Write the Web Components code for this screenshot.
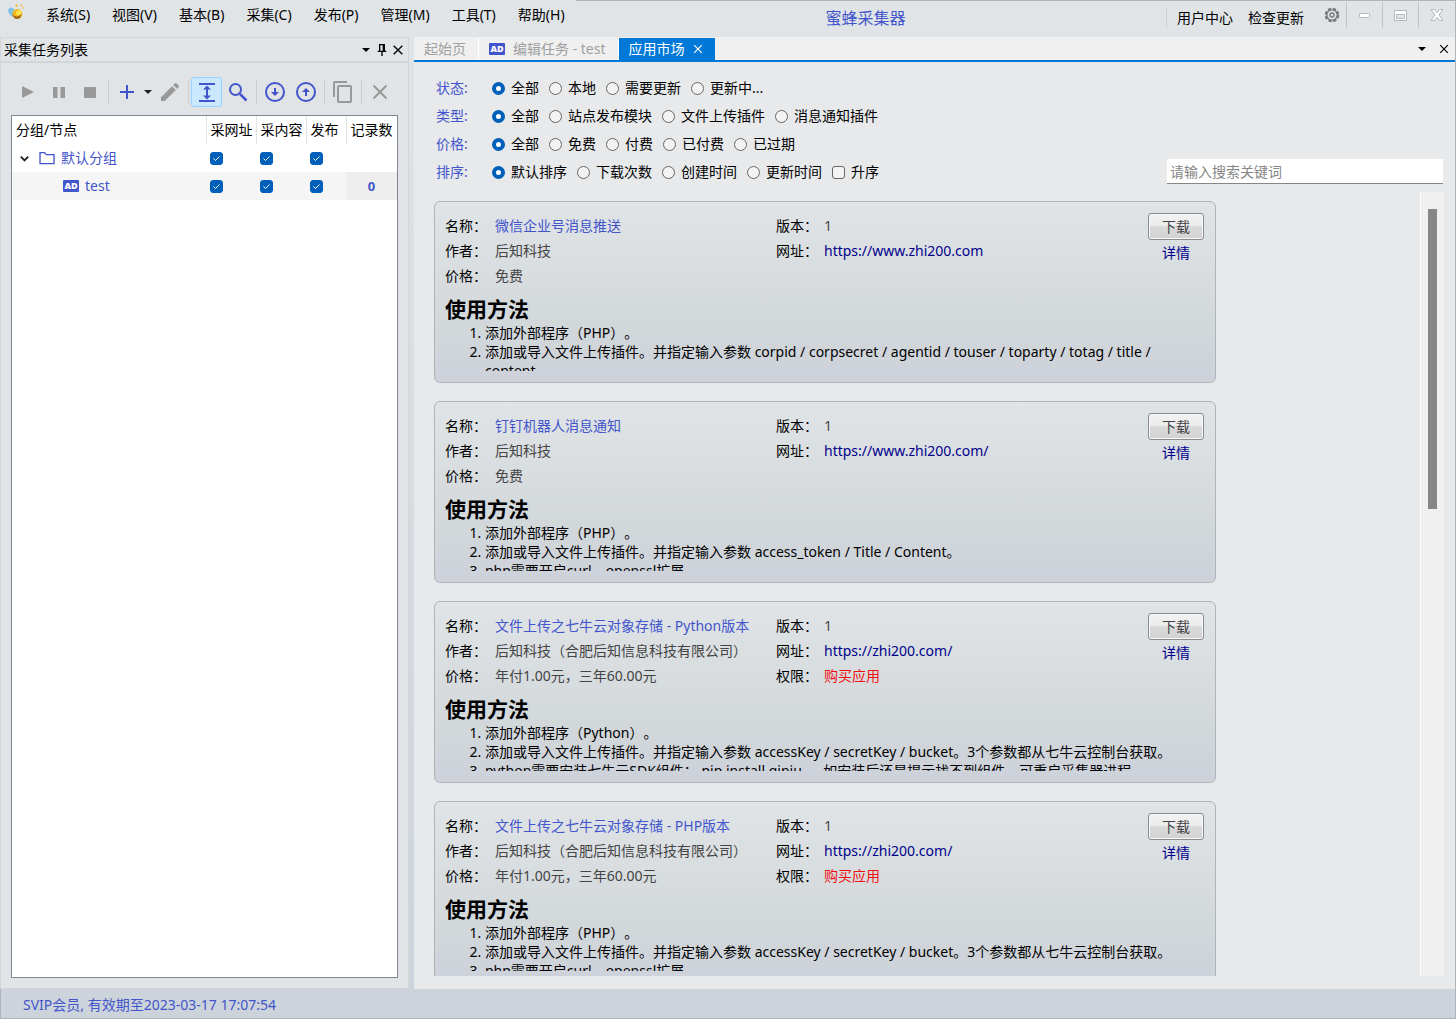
<!DOCTYPE html>
<html lang="zh-CN">
<head>
<meta charset="utf-8">
<title>蜜蜂采集器</title>
<style>
    :root {
        --accent: #4355cb;
        --active: #0078d7;
        --check: #005fb8;
        --line: #b0b4b8;
        --muted: #999;
    }
    body {
        margin: 0;
        font: 14px/20px "Noto Sans", "Noto Sans CJK SC", sans-serif;
        text-spacing-trim: space-all;
        color: #000;
    }
    h2 { margin: 0; font-size: 21px; line-height: 28px; }
    ol { margin: 0; padding-left: 40px; line-height: 19px; }
</style>
</head>
<body>
<bee-window>
    <bee-title-bar slot="title" caption="蜜蜂采集器"></bee-title-bar>
    <bee-task-panel slot="side"></bee-task-panel>
    <bee-tab-bar slot="tabs"></bee-tab-bar>
    <bee-filters slot="filters"></bee-filters>

    <bee-card name="微信企业号消息推送" author="后知科技" price="免费" url="https://www.zhi200.com">
        <h2>使用方法</h2>
        <ol>
            <li>添加外部程序（PHP）。</li>
            <li>添加或导入文件上传插件。并指定输入参数 corpid / corpsecret / agentid / touser / toparty / totag / title / content</li>
        </ol>
    </bee-card>
    <bee-card name="钉钉机器人消息通知" author="后知科技" price="免费" url="https://www.zhi200.com/">
        <h2>使用方法</h2>
        <ol>
            <li>添加外部程序（PHP）。</li>
            <li>添加或导入文件上传插件。并指定输入参数 access_token / Title / Content。</li>
            <li>php需要开启curl、openssl扩展</li>
        </ol>
    </bee-card>
    <bee-card name="文件上传之七牛云对象存储 - Python版本" author="后知科技（合肥后知信息科技有限公司）" price="年付1.00元，三年60.00元" url="https://zhi200.com/" paid>
        <h2>使用方法</h2>
        <ol>
            <li>添加外部程序（Python）。</li>
            <li>添加或导入文件上传插件。并指定输入参数 accessKey / secretKey / bucket。3个参数都从七牛云控制台获取。</li>
            <li>python需要安装七牛云SDK组件： pip install qiniu 。 如安装后还是提示找不到组件，可重启采集器进程</li>
        </ol>
    </bee-card>
    <bee-card name="文件上传之七牛云对象存储 - PHP版本" author="后知科技（合肥后知信息科技有限公司）" price="年付1.00元，三年60.00元" url="https://zhi200.com/" paid>
        <h2>使用方法</h2>
        <ol>
            <li>添加外部程序（PHP）。</li>
            <li>添加或导入文件上传插件。并指定输入参数 accessKey / secretKey / bucket。3个参数都从七牛云控制台获取。</li>
            <li>php需要开启curl、openssl扩展</li>
        </ol>
    </bee-card>

    <span slot="status">SVIP会员, 有效期至2023-03-17 17:07:54</span>
</bee-window>

<script>
const ICONS = {
    play: '<path d="M6 6v12l12-6z"/>',
    pause: '<path d="M6 7h4.500v11H6zM13.500 7H18v11h-4.500z"/>',
    stop: '<rect x="6" y="7" width="12" height="11" rx="1"/>',
    plus: '<path d="M5 12h14M12 5v14" fill="none" stroke="currentColor" stroke-width="2"/>',
    caret: '<path d="M8 10h8l-4 4z"/>',
    pencil: '<path d="M3 17.250V21h3.750L17.810 9.940l-3.750-3.750zM20.710 7.040a1 1 0 0 0 0-1.410l-2.340-2.340a1 1 0 0 0-1.410 0l-1.830 1.830 3.750 3.750z"/>',
    expand: '<path d="M4 3h16v2H4zM4 20h16v2H4zM12 5.500l4 4h-3v6h3l-4 4-4-4h3v-6H8z"/>',
    search: '<circle cx="9.500" cy="9.500" r="5.500" fill="none" stroke="currentColor" stroke-width="2"/><path d="M14 14l6.500 6.500" stroke="currentColor" stroke-width="2.500"/>',
    down: '<circle cx="12" cy="12" r="9" fill="none" stroke="currentColor" stroke-width="2"/><path d="M11 8h2v4h3l-4 4-4-4h3z"/>',
    up: '<circle cx="12" cy="12" r="9" fill="none" stroke="currentColor" stroke-width="2"/><path d="M11 16h2v-4h3l-4-4-4 4h3z"/>',
    copy: '<path d="M16 1H4a2 2 0 0 0-2 2v14h2V3h12zM19 5H8a2 2 0 0 0-2 2v14a2 2 0 0 0 2 2h11a2 2 0 0 0 2-2V7a2 2 0 0 0-2-2zm0 16H8V7h11z"/>',
    cross: '<path d="M5.500 5.500l13 13M18.500 5.500l-13 13" fill="none" stroke="currentColor" stroke-width="2"/>',
    pin: '<path d="M7.500 3h9v10h2v2h-5.500v6h-2v-6H5.500v-2h2zM9.500 5v8h3.500V5z" fill-rule="evenodd"/>',
    chevron: '<path d="M4 8l8 8 8-8" fill="none" stroke="currentColor" stroke-width="4"/>',
    folder: '<path d="M1.500 4h7l2.500 3h11.500v13.500h-21z" fill="none" stroke="currentColor" stroke-width="2"/>',
    gear: '<g fill="none" stroke="currentColor"><circle cx="12" cy="12" r="9.500" stroke-width="3" stroke-dasharray="5 2.460"/><circle cx="12" cy="12" r="7.800" stroke-width="2"/><circle cx="12" cy="12" r="3" stroke-width="2"/></g>',
    bee: '<ellipse cx="6" cy="12" rx="5" ry="7" fill="#7fc4e8" transform="rotate(-30 6 12)"/><circle cx="14" cy="15" r="7.500" fill="#f0b51e"/><path d="M7 17q6 6 13-1M9 20.500q5 3 10-1" stroke="#7b4a10" stroke-width="1.500" fill="none"/><circle cx="16" cy="13" r="4" fill="#ffe14a"/><circle cx="13" cy="2.500" r="2" fill="#f0c24a"/><circle cx="20" cy="2" r="1.500" fill="#e9b84a"/><circle cx="22.500" cy="5.500" r="1.500" fill="#ecc766"/>'
};

const define = ( name, styles, markup ) => {
    customElements.define( name, class extends HTMLElement {

        constructor() {
            super();
            this.attachShadow({ mode: 'open' });
        }

        connectedCallback() {
            const html = typeof markup === 'function' ? markup( this ) : markup;
            this.shadowRoot.innerHTML = `<style>:host, * { box-sizing: border-box; } ${ styles }</style>${ html }`;
        }
    });
};

define( 'bee-icon', `
    :host { display: block; flex: none; width: 16px; height: 16px; }
    svg { display: block; width: 100%; height: 100%; fill: currentColor; }
`, el => `<svg viewBox="0 0 24 24" aria-hidden="true">${ ICONS[ el.getAttribute( 'name' ) ] }</svg>` );

define( 'bee-badge', `
    :host {
        display: grid;
        place-items: center;
        flex: none;
        width: 16px;
        height: 12px;
        border-radius: 1px;
        background: var( --accent );
        color: white;
        font: 800 9px/12px "Open Sans", sans-serif;
    }
`, 'AD' );

define( 'bee-tool', `
    :host { display: block; flex: none; width: 31px; height: 30px; color: var( --accent ); }
    :host([narrow]) { width: 12px; color: #222; }
    :host([off]) { color: var( --muted ); }
    button {
        display: grid;
        place-content: center;
        width: 100%;
        height: 100%;
        padding: 0;
        border: 1px solid transparent;
        border-radius: 3px;
        background: none;
        color: inherit;
    }
    :host([pressed]) button { background: #cce8ff; border-color: #99d1ff; }
    bee-icon { width: 24px; height: 24px; }
`, el => `
    <button type="button" aria-label="${ el.getAttribute( 'label' ) }">
        <bee-icon name="${ el.getAttribute( 'icon' ) }"></bee-icon>
    </button>
` );

define( 'bee-title-bar', `
    :host {
        display: flex;
        height: 37px;
        border-top: 1px solid var( --line );
        background: #e0e4e7;
    }
    nav { display: flex; width: 576px; margin-top: -1px; padding-left: 8px; background: #e0e4e7; }
    nav bee-icon { margin: 4px 11px 0 0; }
    nav a { padding: 5px 11px 0; }
    a { color: inherit; text-decoration: none; white-space: nowrap; }
    h1 {
        flex: 1;
        margin: 0 11px 0 0;
        padding-top: 6px;
        text-align: center;
        font-size: 16px;
        line-height: 22px;
        font-weight: normal;
        color: var( --accent );
    }
    .links { display: flex; gap: 15px; margin: 7px 14px 0 0; padding-left: 10px; height: 20px; border-left: 1px solid #ccd0d3; }
    .win { display: flex; height: 26px; margin: 1px 1px 0 0; }
    .win button {
        display: grid;
        place-items: center;
        width: 36px;
        padding: 0;
        border: 0;
        border-left: 1px solid #c0c4c7;
        background: none;
        color: #777;
    }
    .win .set { width: 28px; border: 0; }
    .win svg { width: 16px; height: 16px; fill: #fff; stroke: #b4b6b8; }
`, el => `
    <nav>
        <bee-icon name="bee"></bee-icon>
        ${ [ '系统(S)', '视图(V)', '基本(B)', '采集(C)', '发布(P)', '管理(M)', '工具(T)', '帮助(H)' ].map( t => `<a href="#">${ t }</a>` ).join( '' ) }
    </nav>
    <h1>${ el.getAttribute( 'caption' ) }</h1>
    <div class="links"><a href="#">用户中心</a><a href="#">检查更新</a></div>
    <div class="win">
        <button class="set" type="button" aria-label="设置"><bee-icon name="gear"></bee-icon></button>
        <button type="button" aria-label="最小化"><svg viewBox="0 0 16 16"><rect x="2.500" y="6.500" width="10" height="4" rx="1"/></svg></button>
        <button type="button" aria-label="最大化"><svg viewBox="0 0 16 16"><path d="M1.500 3.500h12v10h-12zM3.500 7.500v4h8v-4z" fill-rule="evenodd"/></svg></button>
        <button type="button" aria-label="关闭"><svg viewBox="0 0 16 16"><path d="M2 2.500h3.500L8 5.700l2.500-3.200H14L10 8l4 5.500h-3.500L8 10.300l-2.500 3.200H2L6 8z"/></svg></button>
    </div>
` );

const CHECK = `
    input {
        appearance: none;
        flex: none;
        width: 13px;
        height: 13px;
        margin: 0;
        border: 1px solid #666;
        border-radius: 3px;
        background: #f3f3f3;
    }
    input[type="radio"] { border-radius: 50%; }
    input[type="radio"]:checked { border: 4px solid var( --check ); background: white; }
    input[type="checkbox"]:checked {
        border-color: var( --check );
        background: var( --check ) url('data:image/svg+xml,<svg xmlns="http://www.w3.org/2000/svg" viewBox="0 0 11 11"><path d="M2.500 5.500l2 2 4-4" fill="none" stroke="white"/></svg>');
    }
`;

define( 'bee-task-panel', `
    :host {
        display: flex;
        flex-direction: column;
        border: 1px solid #d3d6d9;
        background: #e0e4e7;
    }
    header { display: flex; align-items: center; height: 25px; padding: 0 2px 0 3px; border-bottom: 2px solid #d3d6d9; }
    h2 { flex: 1; margin: 0; font-size: 14px; line-height: 20px; font-weight: normal; }
    header bee-icon[name="caret"] { width: 24px; height: 24px; margin: 0 -4px; }
    .tools { display: flex; align-items: center; height: 52px; padding: 6px 0 0 11px; }
    .tools i { width: 1px; height: 24px; margin: 0 2px 0 3px; background: #c9cdd0; }
    .box { flex: 1; margin: 0 10px 10px; border: 1px solid #828790; background: white; }
    table { width: 100%; table-layout: fixed; border-collapse: collapse; }
    th, td { height: 28px; padding: 0 4px; text-align: left; font-weight: normal; white-space: nowrap; }
    th + th { border-left: 1px solid #e2e2e2; }
    td div { display: flex; align-items: center; gap: 6px; color: var( --accent ); }
    td input { display: block; }
    .group div { padding-left: 3px; }
    .group bee-icon[name="chevron"] { width: 11px; height: 11px; margin-right: 3px; color: #222; }
    .task { background: #f5f5f5; }
    .task div { padding-left: 47px; }
    .count { background: #eee; color: var( --accent ); font-size: 13px; font-weight: bold; text-align: center; }
    ${ CHECK }
`, () => {
    const boxes = row => [ '采网址', '采内容', '发布' ].map( t => `<td><input type="checkbox" checked aria-label="${ row } ${ t }"></td>` ).join( '' );
    return `
    <header>
        <h2>采集任务列表</h2>
        <bee-icon name="caret"></bee-icon><bee-icon name="pin"></bee-icon><bee-icon name="cross"></bee-icon>
    </header>
    <div class="tools">
        <bee-tool icon="play" label="开始" off></bee-tool>
        <bee-tool icon="pause" label="暂停" off></bee-tool>
        <bee-tool icon="stop" label="停止" off></bee-tool>
        <i></i>
        <bee-tool icon="plus" label="新建"></bee-tool>
        <bee-tool icon="caret" label="更多" narrow></bee-tool>
        <bee-tool icon="pencil" label="编辑" off></bee-tool>
        <i></i>
        <bee-tool icon="expand" label="展开" pressed></bee-tool>
        <bee-tool icon="search" label="搜索"></bee-tool>
        <i></i>
        <bee-tool icon="down" label="导入"></bee-tool>
        <bee-tool icon="up" label="导出"></bee-tool>
        <i></i>
        <bee-tool icon="copy" label="复制" off></bee-tool>
        <i></i>
        <bee-tool icon="cross" label="删除" off></bee-tool>
    </div>
    <div class="box">
        <table>
            <colgroup><col><col width="50"><col width="50"><col width="40"><col width="51"></colgroup>
            <thead><tr><th>分组/节点</th><th>采网址</th><th>采内容</th><th>发布</th><th>记录数</th></tr></thead>
            <tbody>
                <tr class="group"><td><div><bee-icon name="chevron"></bee-icon><bee-icon name="folder"></bee-icon>默认分组</div></td>${ boxes( '默认分组' ) }<td></td></tr>
                <tr class="task"><td><div><bee-badge></bee-badge>test</div></td>${ boxes( 'test' ) }<td class="count">0</td></tr>
            </tbody>
        </table>
    </div>`;
});

define( 'bee-tab-bar', `
    :host { display: flex; height: 25px; padding-top: 1px; border-bottom: 2px solid var( --active ); background: #f0f0f0; }
    button { border: 0; padding: 0; background: none; font: inherit; color: #a0a0a0; display: flex; align-items: center; }
    .tab { padding: 0 12px 0 10px; border-right: 1px solid white; }
    .edit { gap: 8px; }
    .on { gap: 6px; padding-right: 10px; background: var( --active ); color: white; border: 0; }
    bee-icon { width: 14px; height: 14px; }
    .end { display: flex; align-items: center; margin-left: auto; padding-right: 4px; gap: 3px; }
    .end button { color: black; }
    bee-icon[name="caret"] { width: 24px; height: 24px; }
`, `
    <button class="tab start" type="button">起始页</button>
    <button class="tab edit" type="button"><bee-badge></bee-badge>编辑任务 - test</button>
    <button class="tab on" type="button">应用市场<bee-icon name="cross"></bee-icon></button>
    <div class="end">
        <button type="button" aria-label="标签列表"><bee-icon name="caret"></bee-icon></button>
        <button type="button" aria-label="关闭"><bee-icon name="cross"></bee-icon></button>
    </div>
` );

const FILTERS = [
    [ '状态', 'state', [ '全部', '本地', '需要更新', '更新中...' ] ],
    [ '类型', 'type', [ '全部', '站点发布模块', '文件上传插件', '消息通知插件' ] ],
    [ '价格', 'price', [ '全部', '免费', '付费', '已付费', '已过期' ] ],
    [ '排序', 'sort', [ '默认排序', '下载次数', '创建时间', '更新时间' ] ]
];

define( 'bee-filters', `
    :host { display: flex; justify-content: space-between; align-items: flex-end; padding: 12px 12px 6px 22px; }
    fieldset { display: flex; align-items: center; gap: 10px; height: 28px; margin: 0; padding: 0; border: 0; }
    .name { width: 46px; color: var( --accent ); }
    label { display: flex; align-items: center; gap: 6px; white-space: nowrap; }
    ${ CHECK }
    .search {
        width: 276px;
        height: 25px;
        margin-bottom: 2px;
        padding: 0 3px;
        border: 0;
        border-bottom: 1px solid #868686;
        border-radius: 0;
        background: white;
        font: inherit;
    }
    .search::placeholder { color: #868686; }
`, `
    <div>
        ${ FILTERS.map( ([ title, name, options ]) => `
        <fieldset aria-label="${ title }">
            <span class="name">${ title }:</span>
            ${ options.map( ( text, i ) => `<label><input type="radio" name="${ name }"${ i ? '' : ' checked' }>${ text }</label>` ).join( '' ) }
            ${ name === 'sort' ? '<label><input type="checkbox">升序</label>' : '' }
        </fieldset>` ).join( '' ) }
    </div>
    <input class="search" type="search" placeholder="请输入搜索关键词" aria-label="搜索">
` );

define( 'bee-card', `
    :host {
        display: block;
        flex: none;
        width: 782px;
        max-width: 100%;
        padding: 11px 10px;
        border: 1px solid var( --line );
        border-radius: 6px;
        background: linear-gradient( #e0e4e7, #d2d7da 70%, #cdd2db );
    }
    .top { display: flex; justify-content: space-between; }
    dl { display: grid; grid-template-columns: 50px 281px 48px auto; grid-auto-rows: 25px; align-items: center; margin: 0; white-space: nowrap; }
    dd { margin: 0; color: #444; }
    dd.name { color: var( --accent ); }
    dd.buy { color: #f01010; }
    a { color: #00008b; text-decoration: none; }
    .act { display: flex; flex-direction: column; align-items: center; gap: 3px; margin-right: 1px; }
    button {
        width: 56px;
        height: 27px;
        padding: 0;
        border: 1px solid #8a8a8a;
        border-radius: 3px;
        box-shadow: inset 0 0 0 1px #f8f8f8;
        background: linear-gradient( #f2f2f2, #ebebeb 50%, #dadada 50%, #d2d2d2 );
        font: inherit;
        color: #444;
    }
    .desc { height: 76px; margin-top: 7px; padding-right: 10px; overflow: hidden; }
`, el => {
    const get = key => el.getAttribute( key );
    return `
    <div class="top">
        <dl>
            <dt>名称：</dt><dd class="name">${ get( 'name' ) }</dd>
            <dt>版本：</dt><dd>1</dd>
            <dt>作者：</dt><dd>${ get( 'author' ) }</dd>
            <dt>网址：</dt><dd><a href="${ get( 'url' ) }">${ get( 'url' ) }</a></dd>
            <dt>价格：</dt><dd>${ get( 'price' ) }</dd>
            ${ el.hasAttribute( 'paid' ) ? '<dt>权限：</dt><dd class="buy">购买应用</dd>' : '' }
        </dl>
        <div class="act"><button type="button">下载</button><a href="#">详情</a></div>
    </div>
    <div class="desc"><slot></slot></div>`;
});

define( 'bee-window', `
    :host {
        display: grid;
        grid-template: auto minmax( 0, 1fr ) 30px / 409px minmax( 0, 1fr );
        column-gap: 5px;
        height: 100vh;
        background: linear-gradient( #e0e4e7, #ccd3da );
        border-right: 1px solid var( --line );
    }
    slot[name="title"]::slotted(*), footer { grid-column: 1 / -1; }
    main { display: flex; flex-direction: column; min-height: 0; background: #e7e9eb; }
    .view { display: flex; flex: 1; min-height: 0; margin-bottom: 13px; padding-right: 11px; }
    .list { flex: 1; display: flex; flex-direction: column; gap: 18px; padding: 9px 20px 0; overflow: hidden; }
    .bar { width: 24px; padding: 17px 7px 0; border-left: 1px solid white; background: #f0f0f0; }
    .bar i { display: block; height: 300px; background: #868686; }
    footer {
        display: flex;
        align-items: center;
        padding: 2px 0 0 22px;
        border-bottom: 1px solid var( --line );
        border-left: 1px solid var( --line );
        background: #ccd3da;
        color: var( --accent );
    }
`, `
    <slot name="title"></slot>
    <slot name="side"></slot>
    <main>
        <slot name="tabs"></slot>
        <slot name="filters"></slot>
        <div class="view">
            <div class="list"><slot></slot></div>
            <div class="bar"><i></i></div>
        </div>
    </main>
    <footer><slot name="status"></slot></footer>
` );
</script>
</body>
</html>
